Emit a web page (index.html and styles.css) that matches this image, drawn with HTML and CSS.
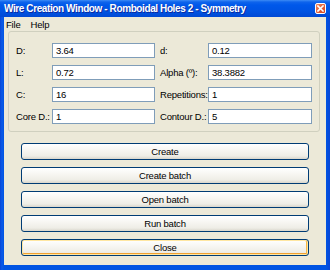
FILE: index.html
```html
<!DOCTYPE html>
<html>
<head>
<meta charset="utf-8">
<link rel="stylesheet" href="styles.css">
</head>
<body>
<div class="window">
  <div class="titlebar">
    <span class="title">Wire Creation Window - Romboidal Holes 2 - Symmetry</span>
    <span class="close-btn">
      <svg width="7" height="7" viewBox="0 0 7 7"><path d="M1 1 L6 6 M6 1 L1 6" stroke="#fff" stroke-width="1.6" stroke-linecap="square"/></svg>
    </span>
  </div>
  <div class="client">
    <div class="menubar">
      <span class="menu-item">File</span>
      <span class="menu-item">Help</span>
    </div>
    <div class="group">
      <span class="label">D:</span><span class="input">3.64</span>
      <span class="label">d:</span><span class="input">0.12</span>
      <span class="label">L:</span><span class="input">0.72</span>
      <span class="label">Alpha (º):</span><span class="input">38.3882</span>
      <span class="label">C:</span><span class="input">16</span>
      <span class="label">Repetitions:</span><span class="input">1</span>
      <span class="label">Core D.:</span><span class="input">1</span>
      <span class="label">Contour D.:</span><span class="input">5</span>
    </div>
    <div class="buttons">
      <div class="btn">Create</div>
      <div class="btn">Create batch</div>
      <div class="btn">Open batch</div>
      <div class="btn">Run batch</div>
      <div class="btn btn-hot">Close</div>
    </div>
  </div>
</div>
</body>
</html>
```
FILE: styles.css
```css
html, body {
  margin: 0;
  padding: 0;
}
body {
  width: 330px;
  height: 270px;
  overflow: hidden;
  font-family: "Liberation Sans", Arial, sans-serif;
  font-size: 9.5px;
  letter-spacing: -0.2px;
  color: #000;
}
.window {
  width: 330px;
  height: 270px;
  box-sizing: border-box;
  background: linear-gradient(90deg, #0845D6 0px, #0A5AE8 2px, #0054E3 4px, #0054E3 326px, #0845D6 330px);
  display: flex;
  flex-direction: column;
}
.titlebar {
  height: 17px;
  flex: none;
  display: flex;
  align-items: center;
  justify-content: space-between;
  padding: 0 4px 0 4px;
  background: linear-gradient(#3D8BF5 0px, #0F64EC 2px, #0058EA 5px, #0054E3 11px, #0049D4 17px);
}
.title {
  color: #fff;
  font-weight: bold;
  font-size: 10px;
  letter-spacing: -0.4px;
  text-shadow: 1px 1px 0 #0A2AA0;
  white-space: nowrap;
}
.close-btn {
  width: 11px;
  height: 11px;
  box-sizing: border-box;
  border: 1px solid #fff;
  border-radius: 2px;
  background: linear-gradient(135deg, #F0875E, #D8401A);
  display: flex;
  align-items: center;
  justify-content: center;
}
.client {
  flex: 1;
  margin: 0 4px 5px 4px;
  background: #ECE9D8;
  display: flex;
  flex-direction: column;
}
.menubar {
  height: 14px;
  flex: none;
  display: flex;
  align-items: center;
  gap: 10px;
  padding-left: 2px;
}
.group {
  margin: 0 6px 0 4px;
  height: 101px;
  box-sizing: border-box;
  border: 1px solid #D0D0BF;
  border-radius: 3px;
  padding: 11px 7px 0 7px;
  display: grid;
  grid-template-columns: 36px 103px 53px 1fr;
  grid-auto-rows: 15px;
  row-gap: 7px;
  align-items: center;
}
.group .label:nth-child(4n+3) {
  margin-left: 5px;
}
.label {
  white-space: nowrap;
}
.input {
  height: 15px;
  box-sizing: border-box;
  border: 1px solid #7F9DB9;
  background: #fff;
  padding-left: 3px;
  line-height: 13px;
}
.buttons {
  margin: 11px 17px 0 17px;
  display: flex;
  flex-direction: column;
  gap: 7px;
}
.btn {
  height: 17px;
  box-sizing: border-box;
  border: 1px solid #003C74;
  border-radius: 3px;
  background: linear-gradient(#FFFFFF 0%, #F7F6F2 40%, #EEEDE6 80%, #D9D6CB 100%);
  display: flex;
  align-items: center;
  justify-content: center;
  line-height: 1;
}
.btn-hot {
  box-shadow: inset 0 0 0 1px #FFE7A2, inset 0 -2px 0 0 #F0A030, inset -1px 0 0 1px #F8B849;
  background: linear-gradient(#FFFFFF 0%, #F7F6F2 40%, #EEEDE6 80%, #E8E3D5 100%);
}
```
